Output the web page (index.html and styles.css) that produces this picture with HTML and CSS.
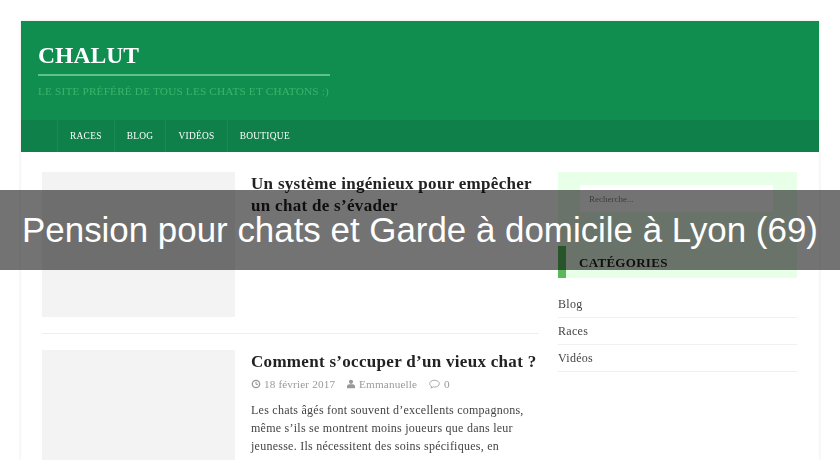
FILE: index.html
```html
<!DOCTYPE html>
<html lang="fr">
<head>
  <meta charset="UTF-8">
  <title>Pension pour chats et Garde à domicile à Lyon (69)</title>
  <link rel="stylesheet" href="styles.css">
</head>
<body>

<div class="site">
  <header class="site-header">
    <div class="brand">
      <div class="brand-name">CHALUT</div>
      <div class="brand-tag">LE SITE PRÉFÉRÉ DE TOUS LES CHATS ET CHATONS :)</div>
    </div>
    <nav class="main-nav">
      <a href="#">RACES</a>
      <a href="#">BLOG</a>
      <a href="#">VIDÉOS</a>
      <a href="#">BOUTIQUE</a>
    </nav>
  </header>

  <div class="content">
    <main class="posts">
      <article class="post">
        <div class="thumb"></div>
        <div class="post-body">
          <h2>Un système ingénieux pour empêcher un chat de s’évader</h2>
        </div>
      </article>

      <article class="post">
        <div class="thumb"></div>
        <div class="post-body">
          <h2>Comment s’occuper d’un vieux chat ?</h2>
          <div class="meta">
            <span>
              <svg viewBox="0 0 12 12" class="icon"><circle cx="6" cy="6" r="4.4" fill="none" stroke="currentColor" stroke-width="1.6"/><path d="M6 3.2V6.4H8.4" fill="none" stroke="currentColor" stroke-width="1.2"/></svg>
              18 février 2017
            </span>
            <span>
              <svg viewBox="0 0 12 12" class="icon"><circle cx="6" cy="3.4" r="2.5" fill="currentColor"/><path d="M1.2 11V8.6C1.2 7 2.6 6.2 4 6.2H8C9.4 6.2 10.8 7 10.8 8.6V11Z" fill="currentColor"/></svg>
              Emmanuelle
            </span>
            <span>
              <svg viewBox="0 0 14 12" class="icon icon-wide"><path d="M7 1.5C3.8 1.5 1.2 3.3 1.2 5.6C1.2 7 2.1 8.1 3.5 8.9L2.8 10.8L5.5 9.5C6 9.6 6.5 9.7 7 9.7C10.2 9.7 12.8 7.9 12.8 5.6C12.8 3.3 10.2 1.5 7 1.5Z" fill="none" stroke="currentColor"/></svg>
              0
            </span>
          </div>
          <p>Les chats âgés font souvent d’excellents compagnons, même s’ils se montrent moins joueurs que dans leur jeunesse. Ils nécessitent des soins spécifiques, en</p>
        </div>
      </article>
    </main>

    <aside class="sidebar">
      <div class="widget-top">
        <div class="search-box">Recherche...</div>
        <h3 class="widget-title">CATÉGORIES</h3>
      </div>
      <ul class="cats">
        <li>Blog</li>
        <li>Races</li>
        <li>Vidéos</li>
      </ul>
    </aside>
  </div>
</div>

<div class="banner">Pension pour chats et Garde à domicile à Lyon (69)</div>

</body>
</html>
```

FILE: styles.css
```css
html, body {
  margin: 0;
  height: 460px;
  overflow: hidden;
  background-color: #ffffff;
}
body {
  font-family: "Liberation Serif", serif;
  color: #333;
  padding-top: 21px;
  box-sizing: border-box;
}
.site {
  width: 798px;
  height: 439px;
  margin-left: 21px;
  box-shadow: 0 0 2px 1px #f0f0f0;
  filter: blur(0.3px);
  overflow: hidden;
}
.site-header {
  background-color: #108e50;
}
.brand {
  height: 99px;
  padding-left: 17px;
  box-sizing: border-box;
  padding-top: 20px;
}
.brand-name {
  color: #ffffff;
  font-size: 23.6px;
  font-weight: bold;
  line-height: 29px;
  width: 292px;
  padding-bottom: 4px;
  border-bottom: 2px solid #62c08a;
}
.brand-tag {
  color: #3cb46a;
  font-size: 11.3px;
  line-height: 14px;
  margin-top: 8px;
  white-space: nowrap;
  letter-spacing: 0.15px;
}
.main-nav {
  display: flex;
  height: 32px;
  padding-left: 36px;
  background-color: #0f8049;
}
.main-nav a {
  color: #ffffff;
  text-decoration: none;
  font-size: 9.4px;
  line-height: 32px;
  padding: 0 12px;
  border-left: 1px solid #1a8a54;
  letter-spacing: 0.3px;
}
.content {
  display: flex;
  padding: 20px 22px 0 21px;
  gap: 19px;
}
.posts {
  width: 497px;
}
.post {
  display: flex;
  gap: 16px;
  padding-bottom: 16px;
  margin-bottom: 16px;
  border-bottom: 1px solid #eeeeee;
}
.thumb {
  flex: none;
  width: 193px;
  height: 145px;
  background-color: #f3f3f3;
}
.post-body h2 {
  margin: 1px 0 0;
  font-size: 17px;
  line-height: 22px;
  font-weight: bold;
  color: #222;
  letter-spacing: 0.3px;
}
.meta {
  display: flex;
  gap: 11px;
  margin-top: 3px;
  font-size: 11.2px;
  line-height: 16px;
  color: #999;
  letter-spacing: 0.15px;
}
.icon {
  width: 10px;
  height: 10px;
  vertical-align: -1px;
}
.icon-wide {
  width: 13px;
}
.post-body p {
  margin: 9px 0 0;
  font-size: 12px;
  line-height: 18px;
  color: #444;
  letter-spacing: 0.25px;
}
.sidebar {
  width: 239px;
}
.widget-top {
  background-color: #e8ffe8;
  height: 106px;
  padding-top: 13px;
  box-sizing: border-box;
}
.search-box {
  width: 193px;
  height: 27px;
  margin-left: 22px;
  padding-left: 9px;
  box-sizing: border-box;
  background-color: #ffffff;
  font-size: 9px;
  line-height: 28px;
  color: #888;
}
.widget-title {
  margin: 34px 0 0;
  height: 32px;
  border-left: 8px solid #5cb85c;
  padding-left: 13px;
  font-size: 13px;
  line-height: 33px;
  color: #222;
  letter-spacing: 0.3px;
}
.cats {
  list-style: none;
  margin: 13px 0 0;
  padding: 0;
}
.cats li {
  font-size: 12px;
  line-height: 26px;
  border-bottom: 1px solid #f0f0f0;
  color: #444;
  letter-spacing: 0.3px;
}
.banner {
  position: absolute;
  left: 0;
  top: 190px;
  width: 840px;
  height: 80px;
  background-color: rgba(0, 0, 0, 0.55);
  color: #ffffff;
  font-family: "Liberation Sans", Arial, sans-serif;
  font-size: 34.9px;
  line-height: 80px;
  text-align: center;
  white-space: nowrap;
}
```
